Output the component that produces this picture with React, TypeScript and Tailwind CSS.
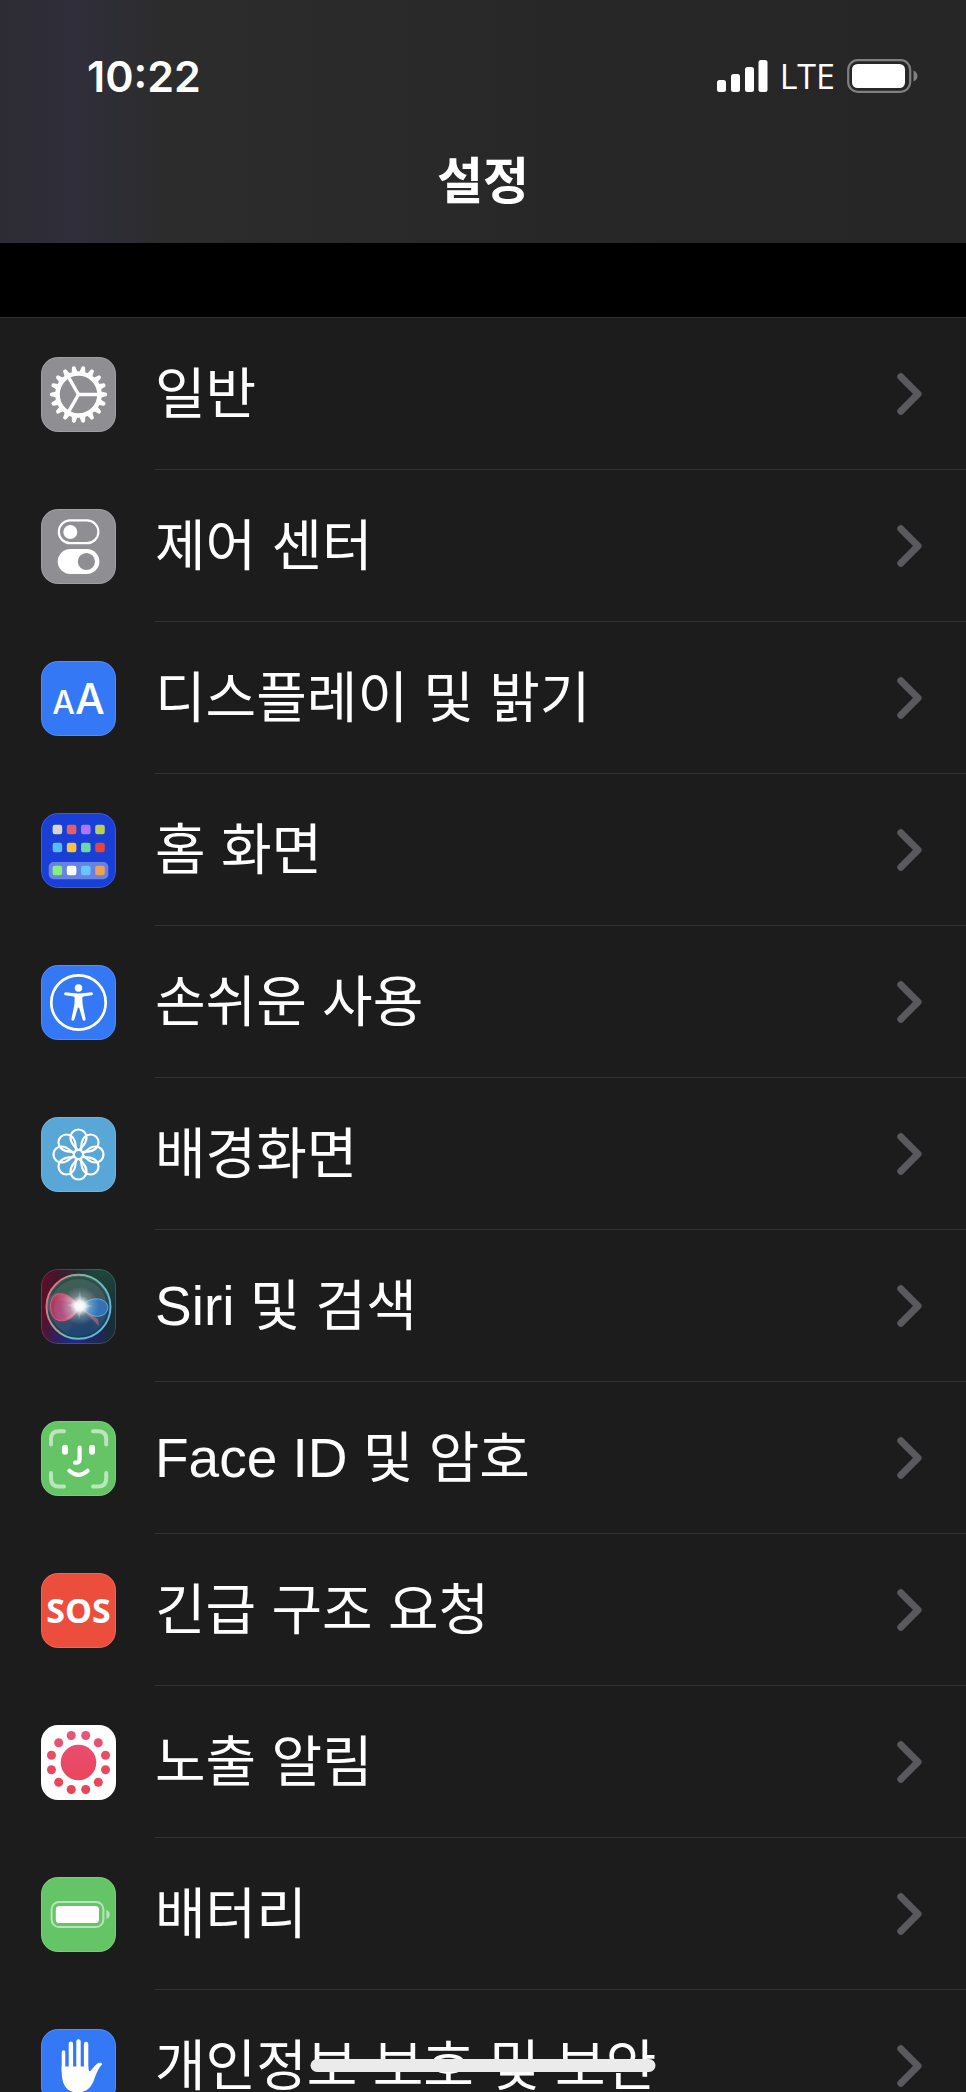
import type { ReactNode } from "react";

const gearTeeth = Array.from({ length: 18 }, (_, i) => i * 20);
const petals = Array.from({ length: 8 }, (_, i) => i * 45);
const exposureDots = Array.from({ length: 12 }, (_, i) => i * 30 + 15);

const homeApps = [
  { y: 11.7, colors: ["#d6d6ce", "#ea5b68", "#ae76f7", "#b7cf57"] },
  { y: 29.7, colors: ["#5bbaf8", "#f5c542", "#6fd4a8", "#e5463a"] },
  { y: 52.7, colors: ["#86ef7d", "#ffffff", "#62c8fa", "#f0a055"] },
];

function Glyph({ children }: { children: ReactNode }) {
  return (
    <svg viewBox="0 0 75 75" className="size-full" fill="none" aria-hidden="true">
      {children}
    </svg>
  );
}

function GearIcon() {
  return (
    <Glyph>
      <g transform="translate(37.5 37.5)" fill="#fff">
        {gearTeeth.map((angle) => (
          <path
            key={angle}
            d="M21 -3.2 L27.6 -1.8 Q28.6 -1.5 28.6 0 Q28.6 1.5 27.6 1.8 L21 3.2Z"
            transform={`rotate(${angle})`}
          />
        ))}
        <circle r="21" stroke="#fff" strokeWidth="4.6" fill="none" />
        {[0, 120, 240].map((angle) => (
          <path key={angle} d="M0 0H20" stroke="#fff" strokeWidth="3.4" transform={`rotate(${angle})`} />
        ))}
      </g>
    </Glyph>
  );
}

function ControlCenterIcon() {
  return (
    <Glyph>
      <rect x="17.8" y="11.4" width="39.6" height="22.8" rx="11.4" stroke="#fff" strokeWidth="2.2" />
      <circle cx="29.3" cy="23" r="7" fill="#fff" />
      <rect x="16.7" y="40" width="41.7" height="25" rx="12.5" fill="#fff" />
      <circle cx="45.4" cy="52.5" r="8.6" fill="#8e8e93" />
    </Glyph>
  );
}

function DisplayIcon() {
  return (
    <span
      className="flex size-full items-baseline justify-center pt-[18px] leading-10 font-medium text-white"
      aria-hidden="true"
    >
      <span className="text-[32px]">A</span>
      <span className="text-[42px]">A</span>
    </span>
  );
}

function HomeScreenIcon() {
  return (
    <Glyph>
      <rect x="7.7" y="49" width="59.6" height="17.3" rx="5" fill="#6683e3" />
      {homeApps.map((row) =>
        row.colors.map((color, i) => (
          <rect key={color} x={11.6 + i * 14.2} y={row.y} width="9.6" height="9.6" rx="2.2" fill={color} />
        ))
      )}
    </Glyph>
  );
}

function AccessibilityIcon() {
  return (
    <Glyph>
      <circle cx="37.5" cy="37.5" r="27.2" stroke="#fff" strokeWidth="2.7" />
      <circle cx="37.5" cy="23" r="3.8" fill="#fff" />
      <path
        d="M24.6 27.3 Q37.5 29.6 50.4 27.3 Q52 27.3 52 28.8 Q51.9 29.9 50.6 30.2 L42.4 31.4 Q41.3 31.6 41.3 33 Q41.3 39 42.3 43 L44.6 54 Q44.7 55.6 43.2 55.8 Q42 55.9 41.6 54.6 L38.4 43.6 Q37.5 41.6 36.6 43.6 L33.4 54.6 Q33 55.9 31.8 55.8 Q30.3 55.6 30.4 54 L32.7 43 Q33.7 39 33.7 33 Q33.7 31.6 32.6 31.4 L24.4 30.2 Q23.1 29.9 23 28.8 Q23 27.3 24.6 27.3Z"
        fill="#fff"
      />
    </Glyph>
  );
}

function WallpaperIcon() {
  return (
    <Glyph>
      <g transform="translate(37.5 37.5)" stroke="#fff" strokeWidth="2.2">
        <circle r="4.6" />
        {petals.map((angle) => (
          <path
            key={angle}
            d="M-1.2 -4.6 C-4 -9 -8 -10.5 -8 -17 A8 8 0 0 1 8 -17 C8 -10.5 4 -9 1.2 -4.6"
            transform={`rotate(${angle})`}
          />
        ))}
      </g>
    </Glyph>
  );
}

function SiriIcon() {
  return (
    <Glyph>
      <defs>
        <linearGradient id="siriLeft" x1="0" y1="0" x2="1" y2="0">
          <stop offset="0" stopColor="#5b1029" />
          <stop offset="0.5" stopColor="#2a1a2e" />
          <stop offset="1" stopColor="#173038" />
        </linearGradient>
        <radialGradient id="siriBlue" cx="0.45" cy="1" r="0.5">
          <stop offset="0" stopColor="#1c2b95" />
          <stop offset="1" stopColor="#1c2b95" stopOpacity="0" />
        </radialGradient>
        <radialGradient id="siriGreen" cx="0.8" cy="0" r="0.6">
          <stop offset="0" stopColor="#1d4a3c" />
          <stop offset="1" stopColor="#1d4a3c" stopOpacity="0" />
        </radialGradient>
        <linearGradient id="siriRing" x1="0" y1="0.3" x2="1" y2="0.7">
          <stop offset="0" stopColor="#e0708a" />
          <stop offset="0.5" stopColor="#74c2a4" />
          <stop offset="1" stopColor="#5cb4e4" />
        </linearGradient>
        <linearGradient id="siriOrb" x1="0.3" y1="0" x2="0.6" y2="1">
          <stop offset="0" stopColor="#3d6e58" />
          <stop offset="0.5" stopColor="#4a5b66" />
          <stop offset="1" stopColor="#1a4e7c" />
        </linearGradient>
        <linearGradient id="siriPink" x1="0" y1="0" x2="1" y2="0">
          <stop offset="0" stopColor="#c02550" />
          <stop offset="1" stopColor="#ef9ab4" />
        </linearGradient>
        <radialGradient id="siriGlow">
          <stop offset="0" stopColor="#fff" />
          <stop offset="0.25" stopColor="#fff" stopOpacity="0.9" />
          <stop offset="0.55" stopColor="#d5f2ee" stopOpacity="0.3" />
          <stop offset="1" stopColor="#d5f2ee" stopOpacity="0" />
        </radialGradient>
      </defs>
      <rect width="75" height="75" fill="url(#siriLeft)" />
      <rect width="75" height="75" fill="url(#siriBlue)" />
      <rect width="75" height="75" fill="url(#siriGreen)" />
      <circle cx="37.5" cy="37.8" r="31" fill="url(#siriOrb)" fillOpacity="0.85" />
      <circle cx="37.5" cy="38.5" r="29.5" stroke="#16343a" strokeOpacity="0.45" strokeWidth="2" />
      <circle cx="37.5" cy="37.8" r="32" stroke="url(#siriRing)" strokeWidth="2" />
      <path d="M6 36 C8 20 24 20 39 38 C28 56 10 56 6 36Z" fill="#4c9aa0" fillOpacity="0.35" />
      <path
        d="M9.5 37 C10 22 24 19 39 37.5 C33 50 24 53 18 51.5 C12 50 10 45 9.5 37Z"
        fill="url(#siriPink)"
        fillOpacity="0.85"
        stroke="#e2577d"
        strokeWidth="1"
      />
      <path d="M12 40 C16 27 28 32 38 38 C30 48 20 52 15 49Z" fill="#a04d8c" fillOpacity="0.5" />
      <path
        d="M39 37.5 C47 30 54 29 60 30.5 C68 33 69 41 63 45.5 C55 50 47 46 39 37.5Z"
        fill="#2f7fd0"
        fillOpacity="0.75"
        stroke="#62b6e6"
        strokeWidth="0.9"
      />
      <path d="M39 38 L57 50 L58 57Z" fill="#c57087" fillOpacity="0.6" />
      <path d="M38 40 C33 52 30 58 26 63 C34 69 48 69 54 63 C54 52 46 46 38 40Z" fill="#173d6c" fillOpacity="0.35" />
      <circle cx="39" cy="37" r="19" fill="url(#siriGlow)" />
      <path d="M39 22 L41 34 L52 37 L41 40 L38 50 L36 40 L26 36 L36 33Z" fill="#fff" fillOpacity="0.25" />
    </Glyph>
  );
}

function FaceIdIcon() {
  return (
    <Glyph>
      <path
        d="M10 23.5V18Q10 10.2 18 10.2H23M52 10.2H57Q65.2 10.2 65.2 18V23.5M65.2 52V57.5Q65.2 65.5 57 65.5H52M23 65.5H18Q10 65.5 10 57.5V52"
        stroke="#bbe6bc"
        strokeWidth="4"
        strokeLinecap="round"
      />
      <rect x="21" y="23.7" width="6" height="10" rx="3" fill="#fff" />
      <rect x="48" y="23.7" width="6" height="10" rx="3" fill="#fff" />
      <path
        d="M38.6 26.5V38Q38.6 41.7 35 41.7H34M28.4 49.8Q37.5 58 46.6 49.8"
        stroke="#fff"
        strokeWidth="4.2"
        strokeLinecap="round"
      />
    </Glyph>
  );
}

function SosIcon() {
  return (
    <span
      className="flex size-full items-center justify-center font-['Open_Sans','Noto_Sans',sans-serif] text-[34px] leading-10 font-bold text-white"
      aria-hidden="true"
    >
      SOS
    </span>
  );
}

function ExposureIcon() {
  return (
    <Glyph>
      <defs>
        <linearGradient id="exposure" gradientUnits="userSpaceOnUse" x1="0" y1="5" x2="0" y2="60">
          <stop offset="0" stopColor="#e9567f" />
          <stop offset="0.4" stopColor="#e94c6c" />
          <stop offset="1" stopColor="#ea4458" />
        </linearGradient>
      </defs>
      <g fill="url(#exposure)">
        <circle cx="37.5" cy="37.5" r="17.8" />
        {exposureDots.map((angle) => {
          const rad = (angle * Math.PI) / 180;
          return <circle key={angle} cx={37.5 + 28 * Math.cos(rad)} cy={37.5 + 28 * Math.sin(rad)} r="4.5" />;
        })}
      </g>
    </Glyph>
  );
}

function BatteryIcon() {
  return (
    <Glyph>
      <rect x="10.6" y="24.9" width="51.8" height="25.2" rx="7.5" stroke="#b9e4ba" strokeWidth="2" />
      <rect x="14.8" y="29" width="43.2" height="17" rx="3.6" fill="#fff" />
      <path d="M65.4 32.7Q68.8 34.5 68.8 37.5Q68.8 40.5 65.4 42.3Z" fill="#b9e4ba" />
    </Glyph>
  );
}

function HandIcon() {
  return (
    <Glyph>
      <path d="M22.5 23V42" stroke="#fff" strokeWidth="3.6" strokeLinecap="round" />
      <path d="M29.9 14.8V42M37.5 12.4V42M45.1 15V42" stroke="#fff" strokeWidth="4.4" strokeLinecap="round" />
      <path
        d="M20.7 37.5V43C20.7 56 26 63.5 36.5 63.5C45 63.5 50 59 53 51C55.5 44 57.5 39.5 61 35.6C61.6 33.4 58 33.3 56 34.8C53 37 51 41 49.2 42.2C48 42.6 47.3 40.5 47.3 37.5Z"
        fill="#fff"
      />
    </Glyph>
  );
}

const settings = [
  { label: "일반", tile: "bg-[#8e8e93]", icon: <GearIcon /> },
  { label: "제어 센터", tile: "bg-[#8e8e93]", icon: <ControlCenterIcon /> },
  { label: "디스플레이 및 밝기", tile: "bg-[#3478f6]", icon: <DisplayIcon /> },
  { label: "홈 화면", tile: "bg-[#193fd6]", icon: <HomeScreenIcon /> },
  { label: "손쉬운 사용", tile: "bg-[#3478f6]", icon: <AccessibilityIcon /> },
  { label: "배경화면", tile: "bg-[#59a7d7]", icon: <WallpaperIcon /> },
  { label: "Siri 및 검색", tile: "bg-[#1c1c2c]", icon: <SiriIcon /> },
  { label: "Face ID 및 암호", tile: "bg-[#65c466]", icon: <FaceIdIcon /> },
  { label: "긴급 구조 요청", tile: "bg-[#eb4e3d]", icon: <SosIcon /> },
  { label: "노출 알림", tile: "bg-white", icon: <ExposureIcon /> },
  { label: "배터리", tile: "bg-[#65c466]", icon: <BatteryIcon /> },
  { label: "개인정보 보호 및 보안", tile: "bg-[#3478f6]", icon: <HandIcon /> },
];

function StatusBar() {
  return (
    <div className="flex h-[152px] items-center justify-between pr-12 pl-[87px]">
      <time className="text-[43px] font-semibold">10:22</time>
      <div className="flex items-center gap-3">
        <svg viewBox="0 0 51 32" className="h-8 w-[51px]" fill="#fff" aria-hidden="true">
          <rect x="0" y="20" width="9" height="12" rx="2.5" />
          <rect x="14" y="14" width="9" height="18" rx="2.5" />
          <rect x="28" y="7" width="9" height="25" rx="2.5" />
          <rect x="41.5" y="0" width="9" height="32" rx="2.5" />
        </svg>
        <span className="font-['Open_Sans','Noto_Sans',sans-serif] text-[34px]">LTE</span>
        <svg viewBox="0 0 71 34" className="h-[34px] w-[71px]" fill="none" aria-hidden="true">
          <rect x="1.2" y="1.2" width="62" height="31.6" rx="9.5" stroke="#808080" strokeWidth="2.2" />
          <rect x="5" y="5" width="53" height="24" rx="5.5" fill="#fff" />
          <path d="M66.5 11.5Q70.5 13.5 70.5 17Q70.5 20.5 66.5 22.5Z" fill="#808080" />
        </svg>
      </div>
    </div>
  );
}

export default function App() {
  return (
    <div className="relative h-screen overflow-hidden bg-black font-['Inter','Noto_Sans_CJK_KR',sans-serif] text-white">
      <header className="h-[243px] bg-[linear-gradient(90deg,#2d2c34_0%,#2f2e3a_8%,#2c2c2d_17%,#2b2b2b_30%,#272727_60%,#262626_100%)]">
        <StatusBar />
        <h1 className="text-center text-[50px] leading-[58px] font-bold">설정</h1>
      </header>

      <main className="mt-[74px] border-t border-[#303031] bg-[#1c1c1c]">
        <ul>
          {settings.map((item) => (
            <li key={item.label}>
              <a href="#" className="flex h-[152px] items-center gap-[39px] pl-[41px]">
                <span className={`relative size-[75px] shrink-0 overflow-hidden rounded-[17px] ${item.tile}`}>
                  {item.icon}
                  <span className="absolute inset-0 rounded-[17px] border border-white/15" />
                </span>
                <span className="flex h-full flex-1 items-center justify-between border-b border-[#343436] pr-11">
                  <span className="font-['Liberation_Sans','Noto_Sans_CJK_KR',sans-serif] text-[55px] leading-[80px] whitespace-nowrap">
                    {item.label}
                  </span>
                  <svg viewBox="0 0 25 42" className="h-[42px] w-[25px] shrink-0" fill="none" aria-hidden="true">
                    <path
                      d="M3.8 3.8L21 21L3.8 38.2"
                      stroke="#5a5a5e"
                      strokeWidth="7"
                      strokeLinecap="round"
                      strokeLinejoin="round"
                    />
                  </svg>
                </span>
              </a>
            </li>
          ))}
        </ul>
      </main>

      {/* home indicator */}
      <div className="absolute bottom-5 left-1/2 h-[13px] w-[345px] -translate-x-1/2 rounded-full bg-[#ebebeb]" />
    </div>
  );
}
